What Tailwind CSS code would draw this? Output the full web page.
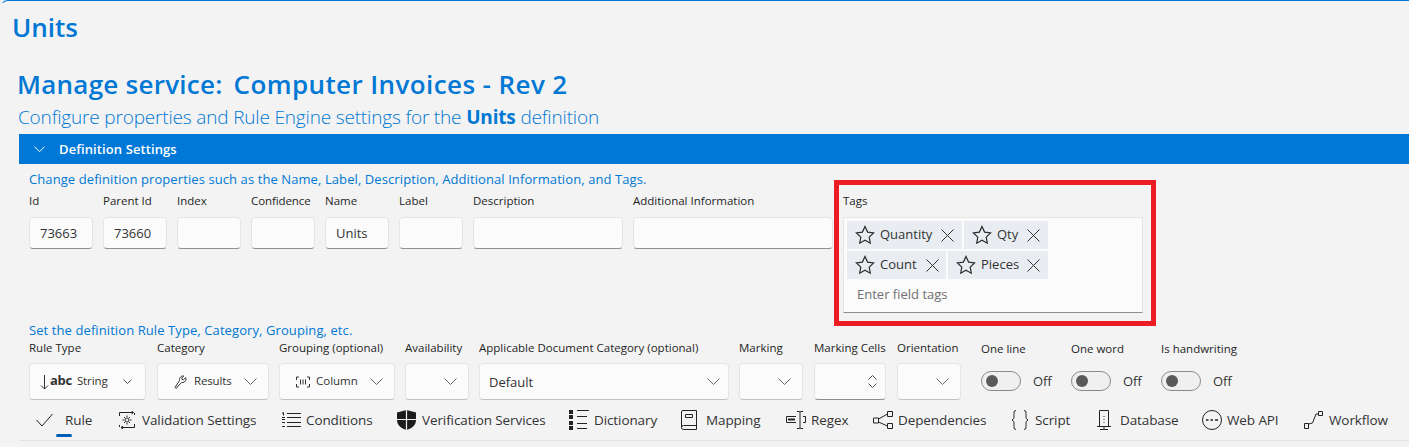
<!DOCTYPE html>
<html lang="en">
<head>
  <meta charset="UTF-8" />
  <title>Units</title>
  <script src="https://cdn.jsdelivr.net/npm/@tailwindcss/browser@4"></script>
</head>
<body class="bg-[#f3f3f3] font-['Open_Sans','Noto_Sans',sans-serif] overflow-hidden">
<div class="relative h-[447px] w-[1409px] border-t border-l border-[#0078d7] border-l-transparent rounded-tl-lg overflow-hidden">
  <h1 class="pl-[11px] pt-[9px] h-[52px] text-[26px] leading-[34px] font-semibold text-[#0078d4]">Units</h1>
  <h2 class="pl-[16px] pt-[14px] h-[51px] text-[26px] leading-[34px] font-semibold text-[#0078d4] tracking-[0.25px]">Manage service: <span class="ml-[4px] tracking-[0.4px]">Computer Invoices - Rev 2</span></h2>
  <p class="pl-[17px] h-[30px] text-[19px] leading-[26px] font-light text-[#0078d4] tracking-[-0.17px]">Configure properties and Rule Engine settings for the <b class="font-bold">Units</b> definition</p>

  <div class="ml-[18px] h-[30px] bg-[#0078d7] flex items-center pl-[15px] gap-[14px] text-white text-[13px] font-semibold tracking-[0.1px]">
    <svg class="w-[11px] h-[7px]" viewBox="0 0 11 7" fill="none" stroke="currentColor"><path d="M.5.7 5.5 5.7 10.5.7"/></svg>
    <span class="mt-[1px]">Definition Settings</span>
  </div>

  <section class="pl-[28px]">
    <p class="pt-[7px] h-[29px] text-[13px] leading-[17px] text-[#0078d4] tracking-[0.09px]">Change definition properties such as the Name, Label, Description, Additional Information, and Tags.</p>
    <div class="flex gap-[10px] items-start">
      <div class="w-[64px]"><label class="block h-[16px] text-[11.5px] leading-[15px] text-[#1f1f1f] whitespace-nowrap">Id</label><div class="mt-[8px] h-[32px] bg-[#fbfbfb] rounded border border-[#e5e5e5] border-b-[#8f8f8f] pl-[10px] text-[13px] leading-[30px] text-[#333]">73663</div></div>
      <div class="w-[64px]"><label class="block h-[16px] text-[11.5px] leading-[15px] text-[#1f1f1f] whitespace-nowrap">Parent Id</label><div class="mt-[8px] h-[32px] bg-[#fbfbfb] rounded border border-[#e5e5e5] border-b-[#8f8f8f] pl-[10px] text-[13px] leading-[30px] text-[#333]">73660</div></div>
      <div class="w-[64px]"><label class="block h-[16px] text-[11.5px] leading-[15px] text-[#1f1f1f] whitespace-nowrap">Index</label><div class="mt-[8px] h-[32px] bg-[#fbfbfb] rounded border border-[#e5e5e5] border-b-[#8f8f8f]"></div></div>
      <div class="w-[64px]"><label class="block h-[16px] text-[11.5px] leading-[15px] text-[#1f1f1f] whitespace-nowrap tracking-[-0.1px]">Confidence</label><div class="mt-[8px] h-[32px] bg-[#fbfbfb] rounded border border-[#e5e5e5] border-b-[#8f8f8f]"></div></div>
      <div class="w-[64px]"><label class="block h-[16px] text-[11.5px] leading-[15px] text-[#1f1f1f] whitespace-nowrap">Name</label><div class="mt-[8px] h-[32px] bg-[#fbfbfb] rounded border border-[#e5e5e5] border-b-[#8f8f8f] pl-[10px] text-[13px] leading-[30px] text-[#333]">Units</div></div>
      <div class="w-[64px]"><label class="block h-[16px] text-[11.5px] leading-[15px] text-[#1f1f1f] whitespace-nowrap">Label</label><div class="mt-[8px] h-[32px] bg-[#fbfbfb] rounded border border-[#e5e5e5] border-b-[#8f8f8f]"></div></div>
      <div class="w-[150px]"><label class="block h-[16px] text-[11.5px] leading-[15px] text-[#1f1f1f] whitespace-nowrap">Description</label><div class="mt-[8px] h-[32px] bg-[#fbfbfb] rounded border border-[#e5e5e5] border-b-[#8f8f8f]"></div></div>
      <div class="w-[200px]"><label class="block h-[16px] text-[11.5px] leading-[15px] text-[#1f1f1f] whitespace-nowrap">Additional Information</label><div class="mt-[8px] h-[32px] bg-[#fbfbfb] rounded border border-[#e5e5e5] border-b-[#8f8f8f]"></div></div>
      <div class="w-[300px]">
        <label class="block h-[16px] text-[11.5px] leading-[15px] text-[#1f1f1f]">Tags</label>
        <div class="mt-[8px] h-[96px] bg-[#fbfbfb] border border-[#e5e5e5] border-b-[#8f8f8f] pl-[3px] pt-[3px]">
          <div class="flex flex-wrap gap-x-[2px] gap-y-[2px] w-[240px]">
            <span class="w-[115px] h-[28px] bg-[#e9edf1] flex items-center pl-[8px] text-[13px] text-[#333]"><svg class="w-[20px] h-[20px] mr-[5px] shrink-0" viewBox="0 0 20 20" fill="none" stroke="#2b2b2b" stroke-width="1.2"><path d="m10 1.5 2.600 5.600 6 .8-4.400 4.200 1.100 6.100L10 15.300l-5.300 2.900 1.100-6.100L1.400 7.900l6-.8z"/></svg>Quantity<svg class="w-[13px] h-[13px] ml-[9px] shrink-0" viewBox="0 0 13 13" stroke="#333"><path d="m.5.5 12 12m0-12-12 12"/></svg></span>
            <span class="w-[84px] h-[28px] bg-[#e9edf1] flex items-center pl-[8px] text-[13px] text-[#333]"><svg class="w-[20px] h-[20px] mr-[5px] shrink-0" viewBox="0 0 20 20" fill="none" stroke="#2b2b2b" stroke-width="1.2"><path d="m10 1.5 2.600 5.600 6 .8-4.400 4.200 1.100 6.100L10 15.300l-5.300 2.900 1.100-6.100L1.400 7.900l6-.8z"/></svg>Qty<svg class="w-[13px] h-[13px] ml-[9px] shrink-0" viewBox="0 0 13 13" stroke="#333"><path d="m.5.5 12 12m0-12-12 12"/></svg></span>
            <span class="w-[99px] h-[28px] bg-[#e9edf1] flex items-center pl-[8px] text-[13px] text-[#333]"><svg class="w-[20px] h-[20px] mr-[5px] shrink-0" viewBox="0 0 20 20" fill="none" stroke="#2b2b2b" stroke-width="1.2"><path d="m10 1.5 2.600 5.600 6 .8-4.400 4.200 1.100 6.100L10 15.300l-5.300 2.900 1.100-6.100L1.400 7.900l6-.8z"/></svg>Count<svg class="w-[13px] h-[13px] ml-[9px] shrink-0" viewBox="0 0 13 13" stroke="#333"><path d="m.5.5 12 12m0-12-12 12"/></svg></span>
            <span class="w-[100px] h-[28px] bg-[#e9edf1] flex items-center pl-[8px] text-[13px] text-[#333]"><svg class="w-[20px] h-[20px] mr-[5px] shrink-0" viewBox="0 0 20 20" fill="none" stroke="#2b2b2b" stroke-width="1.2"><path d="m10 1.5 2.600 5.600 6 .8-4.400 4.200 1.100 6.100L10 15.300l-5.300 2.900 1.100-6.100L1.400 7.900l6-.8z"/></svg>Pieces<svg class="w-[13px] h-[13px] ml-[8px] shrink-0" viewBox="0 0 13 13" stroke="#333"><path d="m.5.5 12 12m0-12-12 12"/></svg></span>
          </div>
          <p class="pl-[10px] pt-[7px] text-[13px] leading-[17px] text-[#707070]">Enter field tags</p>
        </div>
      </div>
    </div>

    <p class="mt-[9px] h-[17px] text-[13px] leading-[17px] text-[#0078d4] tracking-[0.09px]">Set the definition Rule Type, Category, Grouping, etc.</p>
    <div class="flex items-start h-[60px] mt-[1px]">
      <div class="w-[117px] mr-[11px]"><label class="block h-[16px] text-[11.5px] leading-[15px] text-[#1f1f1f] whitespace-nowrap">Rule Type</label>
        <div class="mt-[7px] h-[37px] bg-[#fbfbfb] rounded border border-[#e5e5e5] border-b-[#c4c4c4] flex items-center pl-[10px] pr-[13px] text-[#333]"><svg class="w-[9px] h-[16px] mr-[1px]" viewBox="0 0 9 16" fill="none" stroke="#333"><path d="M4.500 1v14M1 11.500l3.500 3.500 3.500-3.500"/></svg><span class="font-bold text-[13px] tracking-[-0.3px] pb-[2px]">abc</span><span class="ml-[5px] text-[11.5px] tracking-[-0.1px] pb-[2px]">String</span><svg class="w-[9px] h-[6px] ml-auto" viewBox="0 0 9 6" fill="none" stroke="#555"><path d="m.5.500 4 4 4-4"/></svg></div></div>
      <div class="w-[112px] mr-[10px]"><label class="block h-[16px] text-[11.5px] leading-[15px] text-[#1f1f1f] whitespace-nowrap">Category</label>
        <div class="mt-[7px] h-[37px] bg-[#fbfbfb] rounded border border-[#e5e5e5] border-b-[#c4c4c4] flex items-center pl-[16px] pr-[11px] text-[#333]"><svg class="w-[13px] h-[14px] mr-[7px]" viewBox="0 0 13 14" fill="none" stroke="#333"><path d="M1 12.500 2 13.500l5.500-6c2 .6 4.500-1 4.500-3.500 0-.6-.1-1-.3-1.400L9.500 4.700 8 4.500 7.800 3l2-2C7.500.500 5 2.500 5.500 5.500z"/></svg><span class="text-[11.5px] tracking-[-0.15px] pb-[2px]">Results</span><svg class="w-[13px] h-[7px] ml-auto" viewBox="0 0 13 7" fill="none" stroke="#666"><path d="m.5.500 6 6 6-6"/></svg></div></div>
      <div class="w-[116px] mr-[10px]"><label class="block h-[16px] text-[11.5px] leading-[15px] text-[#1f1f1f] whitespace-nowrap">Grouping (optional)</label>
        <div class="mt-[7px] h-[37px] bg-[#fbfbfb] rounded border border-[#e5e5e5] border-b-[#c4c4c4] flex items-center pl-[16px] pr-[11px] text-[#333]"><svg class="w-[14px] h-[12px] mr-[6px]" viewBox="0 0 14 12" fill="none" stroke="#333"><path d="M3 1H.5v3M11 1h2.500v3M3 11H.500V8M11 11h2.500V8M4.500 3.500v5M7 3.500v5M9.500 3.500v5"/></svg><span class="text-[11.5px] pb-[2px]">Column</span><svg class="w-[13px] h-[7px] ml-auto" viewBox="0 0 13 7" fill="none" stroke="#666"><path d="m.5.500 6 6 6-6"/></svg></div></div>
      <div class="w-[64px] mr-[10px]"><label class="block h-[16px] text-[11.5px] leading-[15px] text-[#1f1f1f] whitespace-nowrap">Availability</label>
        <div class="mt-[7px] h-[37px] bg-[#fbfbfb] rounded border border-[#e5e5e5] border-b-[#c4c4c4] flex items-center justify-end pr-[11px]"><svg class="w-[13px] h-[7px]" viewBox="0 0 13 7" fill="none" stroke="#666"><path d="m.5.500 6 6 6-6"/></svg></div></div>
      <div class="w-[250px] mr-[10px]"><label class="block h-[16px] text-[11.5px] leading-[15px] text-[#1f1f1f] whitespace-nowrap">Applicable Document Category (optional)</label>
        <div class="mt-[7px] h-[37px] bg-[#fbfbfb] rounded border border-[#e5e5e5] border-b-[#c4c4c4] flex items-center pl-[9px] pr-[8px] text-[13px] text-[#333]"><span class="pt-[2px]">Default</span><svg class="w-[13px] h-[7px] ml-auto" viewBox="0 0 13 7" fill="none" stroke="#666"><path d="m.5.500 6 6 6-6"/></svg></div></div>
      <div class="w-[64px] mr-[11px]"><label class="block h-[16px] text-[11.5px] leading-[15px] text-[#1f1f1f] whitespace-nowrap">Marking</label>
        <div class="mt-[7px] h-[37px] bg-[#fbfbfb] rounded border border-[#e5e5e5] border-b-[#c4c4c4] flex items-center justify-end pr-[11px]"><svg class="w-[13px] h-[7px]" viewBox="0 0 13 7" fill="none" stroke="#666"><path d="m.5.500 6 6 6-6"/></svg></div></div>
      <div class="w-[72px] mr-[11px]"><label class="block h-[16px] text-[11.5px] leading-[15px] text-[#1f1f1f] whitespace-nowrap">Marking Cells</label>
        <div class="mt-[7px] h-[37px] bg-[#fbfbfb] rounded border border-[#e5e5e5] border-b-[#8f8f8f] flex items-center justify-end pr-[8px]"><svg class="w-[9px] h-[13px]" viewBox="0 0 9 13" fill="none" stroke="#555"><path d="m.5 4.500 4-4 4 4M.5 8.500l4 4 4-4"/></svg></div></div>
      <div class="w-[64px] mr-[20px]"><label class="block h-[16px] text-[11.5px] leading-[15px] text-[#1f1f1f] whitespace-nowrap">Orientation</label>
        <div class="mt-[7px] h-[37px] bg-[#fbfbfb] rounded border border-[#e5e5e5] border-b-[#c4c4c4] flex items-center justify-end pr-[11px]"><svg class="w-[13px] h-[7px]" viewBox="0 0 13 7" fill="none" stroke="#666"><path d="m.5.500 6 6 6-6"/></svg></div></div>
      <div class="w-[90px]"><label class="block h-[16px] text-[11.5px] leading-[17px] text-[#1f1f1f] whitespace-nowrap">One line</label>
        <div class="mt-[14px] flex items-center gap-[12px]"><span class="w-[40px] h-[20px] rounded-full bg-[#f0f0f0] border border-[#8a8a8a] flex items-center pl-[4px]"><i class="w-[12px] h-[12px] rounded-full bg-[#5a5a5a]"></i></span><span class="text-[13px] text-[#333] pt-[2px]">Off</span></div></div>
      <div class="w-[90px]"><label class="block h-[16px] text-[11.5px] leading-[17px] text-[#1f1f1f] whitespace-nowrap">One word</label>
        <div class="mt-[14px] flex items-center gap-[12px]"><span class="w-[40px] h-[20px] rounded-full bg-[#f0f0f0] border border-[#8a8a8a] flex items-center pl-[4px]"><i class="w-[12px] h-[12px] rounded-full bg-[#5a5a5a]"></i></span><span class="text-[13px] text-[#333] pt-[2px]">Off</span></div></div>
      <div class="w-[90px]"><label class="block h-[16px] text-[11.5px] leading-[17px] text-[#1f1f1f] whitespace-nowrap">Is handwriting</label>
        <div class="mt-[14px] flex items-center gap-[12px]"><span class="w-[40px] h-[20px] rounded-full bg-[#f0f0f0] border border-[#8a8a8a] flex items-center pl-[4px]"><i class="w-[12px] h-[12px] rounded-full bg-[#5a5a5a]"></i></span><span class="text-[13px] text-[#333] pt-[2px]">Off</span></div></div>
    </div>
  </section>

  <nav class="relative ml-[18px] mt-[3px] h-[38px] border-b border-[#e3e3e3] flex pl-[17px] text-[13.5px] text-[#333] tracking-[-0.1px]">
    <a class="w-[83px] h-[34px] flex items-center"><svg class="w-[17px] h-[14px] mr-[12px]" viewBox="0 0 17 14" fill="none" stroke="#222"><path d="m.5 7 5.500 6L16.500 1"/></svg>Rule</a>
    <span class="absolute left-[37px] top-[31px] w-[16px] h-[3px] rounded-full bg-[#005fb8]"></span>
    <a class="w-[162px] h-[34px] flex items-center"><svg class="w-[16px] h-[18px] mr-[7px]" viewBox="0 0 16 18" fill="none" stroke="#222"><path d="M.5 5V1.500h14M12.500 0l2 1.500-2 1.500M15.500 13v3.500H2M4 15l-2 1.500L4 18M15.500 2v2M.5 14v2"/><circle cx="8" cy="9" r="2"/><path d="M8 4.500V6M8 12v1.500M3.500 9H5M11 9h1.500M5 6l1 1M10 11l1 1M11 6l-1 1M6 11l-1 1"/></svg>Validation Settings</a>
    <a class="w-[116px] h-[34px] flex items-center"><svg class="w-[20px] h-[16px] mr-[5px]" viewBox="0 0 20 16" fill="none" stroke="#222"><path d="M6 1.500h14M6 5.500h14M6 10.500h14M6 14.500h14"/><path d="M1 1.500 2.500.500v3M1 5.500h3M1 7.500h3M4 10.500H1M1 14.500h3"/></svg>Conditions</a>
    <a class="w-[172px] h-[34px] flex items-center"><svg class="w-[19px] h-[20px] mr-[6px]" viewBox="0 0 19 20"><path fill="#1c1c1c" d="M9.500 0 19 2.500V10c0 5-4 8.500-9.500 10C4 18.500 0 15 0 10V2.500z"/><path stroke="#f3f3f3" stroke-width="1.200" d="M9.500 0v20M0 9.500h19"/></svg>Verification Services</a>
    <a class="w-[112px] h-[34px] flex items-center"><svg class="w-[20px] h-[20px] mr-[5px]" viewBox="0 0 20 20" fill="none" stroke="#222"><path d="M8 .500h12M8 6.500h10M8 13.500h10M8 18.500h10"/><path fill="#222" stroke="none" d="M0 0h4v4H0zM0 5h4v4H0zM0 11h4v4H0zM0 16h4v4H0z"/></svg>Dictionary</a>
    <a class="w-[105px] h-[34px] flex items-center"><svg class="w-[16px] h-[20px] mr-[9px]" viewBox="0 0 16 20" fill="none" stroke="#222"><path d="M.5 17.500V2A1.500 1.500 0 0 1 2 .500h13.500v19H2.500a2 2 0 0 1-2-2 2 2 0 0 1 2-2h13"/><path d="M4.500 4.500h7v3h-7z"/></svg>Mapping</a>
    <a class="w-[87px] h-[34px] flex items-center"><svg class="w-[20px] h-[18px] mr-[5px]" viewBox="0 0 20 18" fill="none" stroke="#222"><path d="M10 5.500H.5v6H10M17 5.500h2.500v6H17M11 .500h2.500l.500.500.500-.500H17M11 17.500h2.500l.500-.500.500.500H17M14 1v16"/><path stroke-width="2" d="M2 8.500h7"/></svg>Regex</a>
    <a class="w-[138px] h-[34px] flex items-center"><svg class="w-[20px] h-[18px] mr-[5px]" viewBox="0 0 20 18" fill="none" stroke="#222"><path d="M.5 7h5v5h-5zM14.500.500h5v5h-5zM14.500 12.500h5v5h-5zM5.500 8 14.500 3M5.500 11l9 4"/></svg>Dependencies</a>
    <a class="w-[86px] h-[34px] flex items-center"><svg class="w-[18px] h-[20px] mr-[6px]" viewBox="0 0 18 20" fill="none" stroke="#222"><path d="M5 .500C2.500.500 3 3 3 5.500S3 9 1 10c2 1 2 2 2 4.500s-.500 5 2 5M13 .500c2.500 0 2 2.500 2 5s0 3.500 2 4.500c-2 1-2 2-2 4.500s.500 5-2 5"/></svg>Script</a>
    <a class="w-[105px] h-[34px] flex items-center"><svg class="w-[14px] h-[20px] mr-[9px]" viewBox="0 0 14 20" fill="none" stroke="#222"><path d="M2.500 16V.500h9V16M0 16.500h14M7 16v3M3 19.500h8M7 6v1M7 9v1M7 12v1"/></svg>Database</a>
    <a class="w-[102px] h-[34px] flex items-center"><svg class="w-[20px] h-[20px] mr-[5px]" viewBox="0 0 20 20" fill="none" stroke="#222"><circle cx="10" cy="10" r="9.500"/><path stroke-width="1.500" d="M4 10h2.500M8.500 10H11M13 10h3"/></svg>Web API</a>
    <a class="h-[34px] flex items-center"><svg class="w-[19px] h-[18px] mr-[6px]" viewBox="0 0 19 18" fill="none" stroke="#222"><path d="M.500 12.500h4v5h-4zM14.500.500h4v4h-4zM4.500 13l4-1L12 3h2.500"/></svg>Workflow</a>
  </nav>

  <div class="absolute left-[833px] top-[179px] w-[322px] h-[146px] border-[5px] border-[#ed1c24]"></div>
</div>
</body>
</html>
